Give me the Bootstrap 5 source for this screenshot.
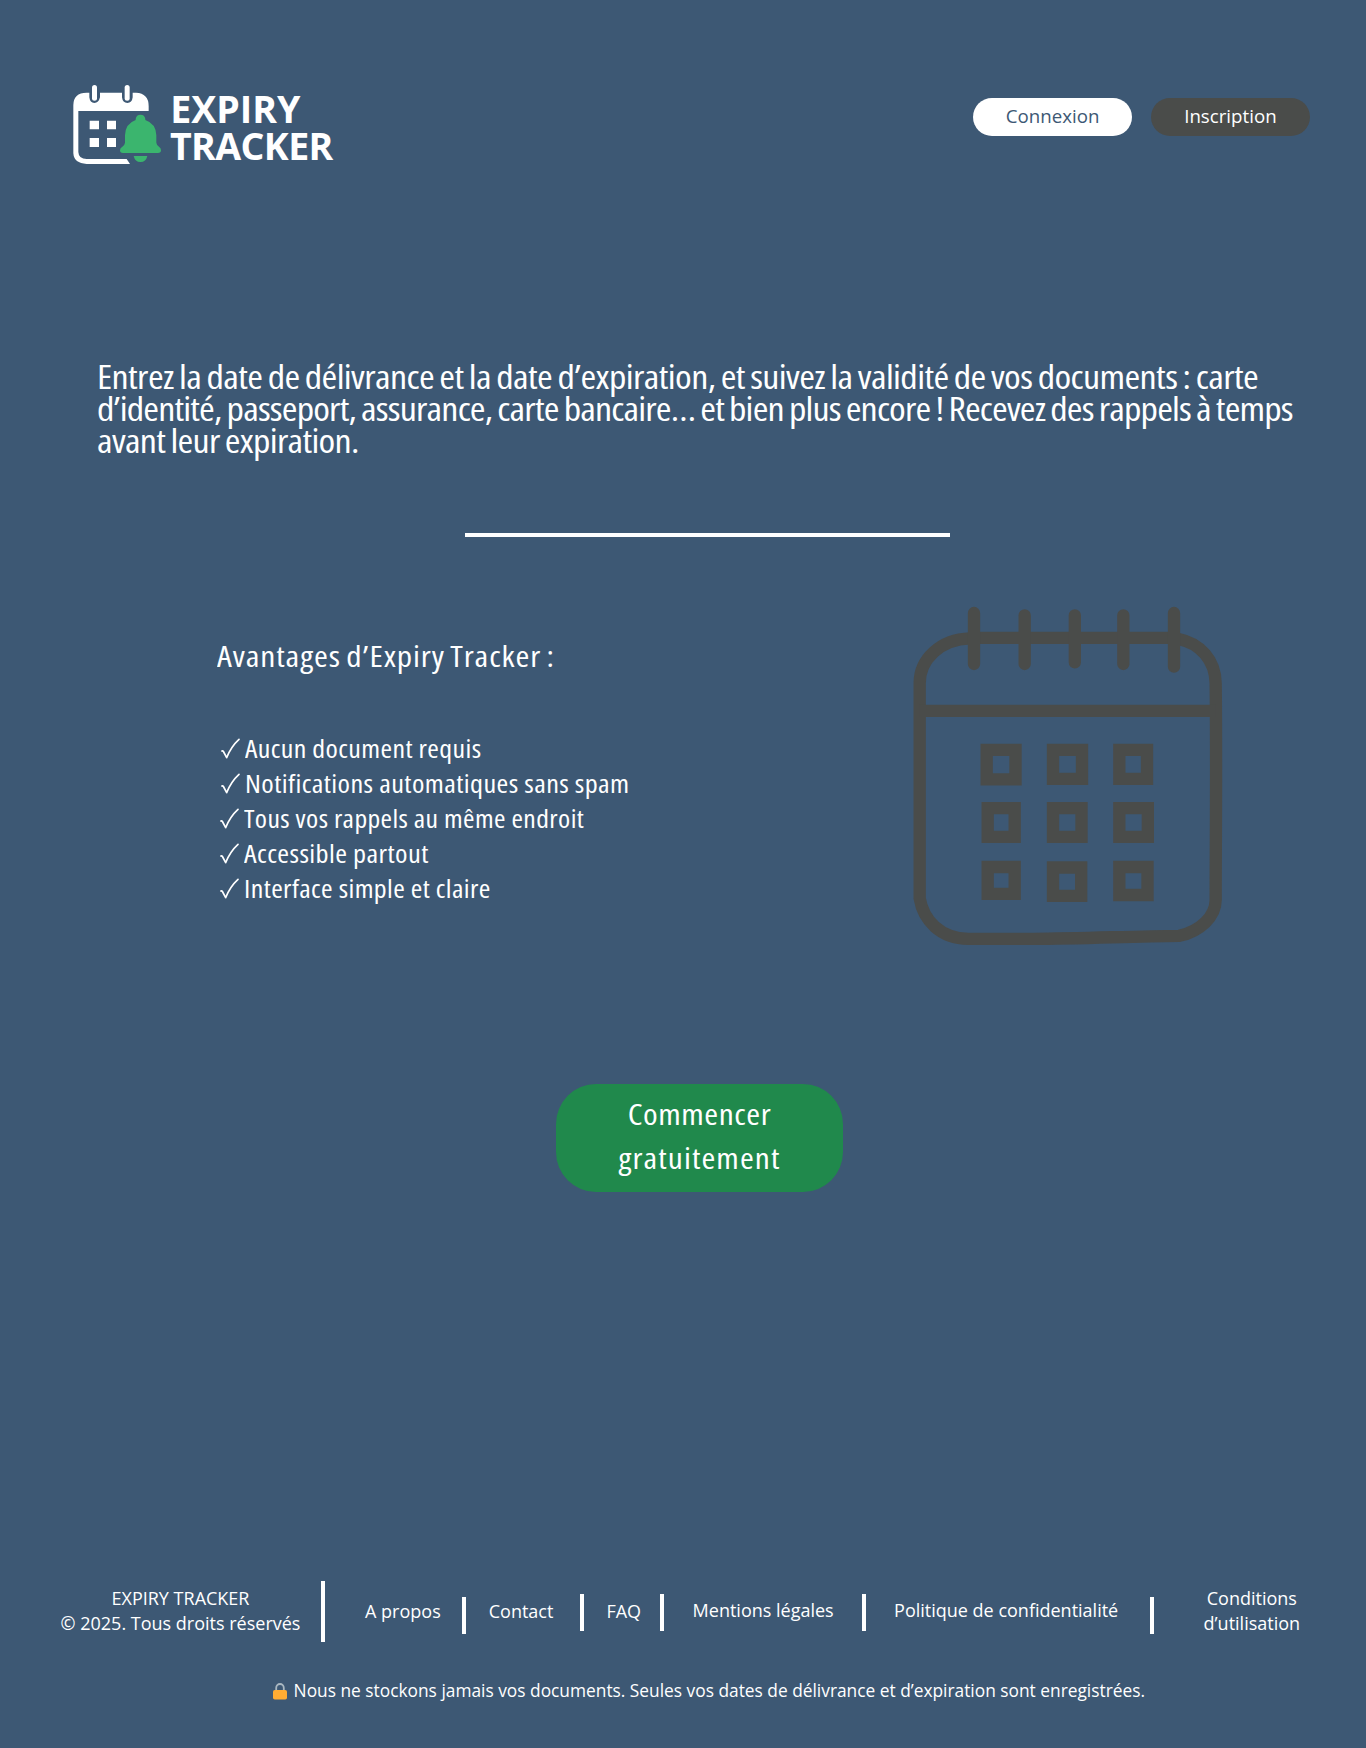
<!DOCTYPE html>
<html lang="fr">
<head>
<meta charset="utf-8">
<meta name="viewport" content="width=device-width, initial-scale=1">
<title>Expiry Tracker</title>
<link href="https://cdn.jsdelivr.net/npm/bootstrap@5.3.0/dist/css/bootstrap.min.css" rel="stylesheet">
<style>
:root{--et-bg:#3d5874;--et-dark:#4a4c4a;--et-green:#20894c}
body{background:var(--et-bg);color:#fff;font-family:"Open Sans","Noto Sans",sans-serif;width:1366px;min-height:1748px}
svg{display:block;flex:none}
.site-head{height:361px;padding:70px 56px 0 60px}
.brand-name{font-weight:700;font-size:37.5px;line-height:36.6px;padding-top:21px;margin-left:5px}
.brand-name span{display:block;width:max-content}
.brand-a{margin-left:.3px}
.brand-b{letter-spacing:-.6px}
.head-btns{padding-top:28px;gap:18.6px}
.pill{width:159.2px;height:38px;border:0;border-radius:19px;padding:0 0 2px;font-size:18.7px;line-height:36px}
.pill-light{background:#fff;color:var(--et-bg)}
.pill-dark{background:var(--et-dark);color:#fff}
/* condensed face, widened a little */
.semi{display:block;width:max-content;font-stretch:75%;transform:scaleX(var(--w,1.15));transform-origin:left center;white-space:nowrap}
.pitch{--w:1.162;margin:0;padding-left:97px;font-size:32.7px;line-height:32px;font-weight:500;letter-spacing:-.52px;word-spacing:-1px;height:96px}
.pitch .l2{letter-spacing:-.71px}
.pitch .l3{letter-spacing:-.6px}
.rule{width:485px;height:4.2px;background:#fff;margin:76.3px 0 0 464.5px}
.features{height:546.500px;padding:52.4px 130px 0 217px}
.features h1{--w:1.17;font-size:28.6px;line-height:40px;font-weight:400;letter-spacing:.75px;word-spacing:-1.4px;margin:46.500px 0 55px .2px}
.features li{font-size:24.6px;line-height:35px;letter-spacing:.35px;padding-left:4px}
.features li svg{margin:7px 5px 0 0}
.features li.shift{padding-left:2.900px}
.w1{--w:1.137}.w2{--w:1.15}.w3{--w:1.128}.w4{--w:1.155}
.cta{width:287.4px;height:107.8px;border:0;border-radius:40px;background:var(--et-green);color:#fff;font-size:29px;line-height:44px;letter-spacing:.5px;margin-left:556px;padding:0 0 4px}
.cta .semi{margin:0 auto;transform-origin:center}
.cta .c2{letter-spacing:.95px}
.site-foot{margin-top:388.600px;font-size:18px;line-height:25px;white-space:nowrap}
.foot-row{height:98px}
.foot-row a{color:#fff;text-decoration:none}
.bar{width:4px;height:36.5px;background:#fff;flex:none}
.bar-tall{height:61px;margin-left:20.4px;margin-top:.4px}
.low{margin-top:16.8px}.high{margin-top:13.8px}
.f1{width:241px;margin-left:60px;margin-top:5.5px}
.f2{width:76px;margin:18.8px 0 0 39.5px}
.f3{width:66px;margin:18.8px 0 0 22.2px}
.f4{width:35px;margin:18.5px 0 0 22.2px}
.f5{width:142px;margin:17.5px 0 0 27.9px}
.f6{width:225px;margin:17.5px 0 0 27.6px}
.f7{width:98px;margin:5.5px 0 0 49.2px}
.b2{margin-left:21px}.b3{margin-left:26px}.b4{margin-left:19px}.b5{margin-left:27.9px}.b6{margin-left:31px}
.foot-note{font-size:17.33px;margin-left:272.6px}
.foot-note svg{margin:5px 7px 0 0}
</style>
</head>
<body>
<header class="site-head d-flex justify-content-between align-items-start">
  <div class="d-flex align-items-start">
    <svg width="105" height="110" viewBox="0 0 315 330">
      <path fill="#fff" d="M40 250V106Q40 68 80 68H88V82Q90 99 103 99T120 82V68H186V82Q188 99 202 99T218 82V68H228Q266 70 266 108V123H55V246Q56 267 80 267H200L210 282H80Q42 280 40 250Z"/>
      <g fill="#fff"><rect x="96" y="45" width="15" height="47" rx="7.5"/><rect x="194" y="45" width="15" height="47" rx="7.5"/><path d="M89 152h28v26H89zM141 152h27v26h-27zM89 204h28v27H89zM141 204h27v27h-27z"/></g>
      <path fill="#3bb56e" d="M227 150V147Q229 134 241.500 134T256 147V150Q288 161 289 196V218Q290 226 297 230Q303 234 303 241Q303 249 294 249H189Q180 249 180 241Q180 234 187 230Q194 226 195 218V196Q196 161 227 150ZM221 258H262Q258 276 241.500 276T221 258Z"/>
    </svg>
    <div class="brand-name"><span class="brand-a">EXPIRY</span><span class="brand-b">TRACKER</span></div>
  </div>
  <div class="head-btns d-flex">
    <button class="btn pill pill-light">Connexion</button>
    <button class="btn pill pill-dark">Inscription</button>
  </div>
</header>
<main>
  <p class="pitch"><span class="semi">Entrez la date de délivrance et la date d’expiration, et suivez la validité de vos documents : carte</span><span class="semi l2">d’identité, passeport, assurance, carte bancaire… et bien plus encore ! Recevez des rappels à temps</span><span class="semi l3">avant leur expiration.</span></p>
  <div class="rule"></div>
  <section class="features d-flex justify-content-between align-items-start">
    <div>
      <h1 class="semi">Avantages d’Expiry Tracker :</h1>
      <ul class="list-unstyled m-0">
        <li class="d-flex"><svg width="19" height="22" viewBox="0 0 57 66"><path d="M3 39Q6 37 8 42L17 59Q30 26 54 4" fill="none" stroke="#fff" stroke-width="5" stroke-linecap="round" stroke-linejoin="round"/></svg><span class="semi w1">Aucun document requis</span></li>
        <li class="d-flex"><svg width="19" height="22" viewBox="0 0 57 66"><path d="M3 39Q6 37 8 42L17 59Q30 26 54 4" fill="none" stroke="#fff" stroke-width="5" stroke-linecap="round" stroke-linejoin="round"/></svg><span class="semi w2">Notifications automatiques sans spam</span></li>
        <li class="d-flex shift"><svg width="19" height="22" viewBox="0 0 57 66"><path d="M3 39Q6 37 8 42L17 59Q30 26 54 4" fill="none" stroke="#fff" stroke-width="5" stroke-linecap="round" stroke-linejoin="round"/></svg><span class="semi w3">Tous vos rappels au même endroit</span></li>
        <li class="d-flex shift"><svg width="19" height="22" viewBox="0 0 57 66"><path d="M3 39Q6 37 8 42L17 59Q30 26 54 4" fill="none" stroke="#fff" stroke-width="5" stroke-linecap="round" stroke-linejoin="round"/></svg><span class="semi w4">Accessible partout</span></li>
        <li class="d-flex shift"><svg width="19" height="22" viewBox="0 0 57 66"><path d="M3 39Q6 37 8 42L17 59Q30 26 54 4" fill="none" stroke="#fff" stroke-width="5" stroke-linecap="round" stroke-linejoin="round"/></svg><span class="semi w1">Interface simple et claire</span></li>
      </ul>
    </div>
    <svg width="346" height="370" viewBox="0 0 1038 1110">
      <g fill="none" stroke="#4a4c4a" stroke-width="37">
        <path d="M252 143.500H851M240 145C150 148 89 208 89 280V925C100 990 150 1046 235 1046.500H430C580 1046 720 1039 868 1037.500C930 1024 977 980 977 930C977 740 980 540 977 280C976 210 930 160 866 147"/>
        <path d="M89 362.500H977"/>
        <path stroke-linecap="round" d="M252 69V222M404 76V222M554.500 76V217M700 76V222M852 69V230"/>
        <path d="M290 479.500h86.500v88.500H290zM489 479.500h87v87h-87zM688 479.500h83v87h-83zM293 654.500h81v86h-81zM489 654.500h85.500v86H489zM688 654.500h85.500v86H688zM293 831h81v80.500h-81zM489 832.500h84.500v85H489zM688 831h84.500v84H688z"/>
      </g>
    </svg>
  </section>
  <button class="btn cta d-block"><span class="semi">Commencer</span><span class="semi c2">gratuitement</span></button>
</main>
<footer class="site-foot">
  <div class="foot-row d-flex align-items-start">
    <div class="f1 text-center">EXPIRY TRACKER<br>© 2025. Tous droits réservés</div>
    <div class="bar bar-tall"></div>
    <a class="f2 text-center" href="#">A propos</a><div class="bar low b2"></div>
    <a class="f3 text-center" href="#">Contact</a><div class="bar high b3"></div>
    <a class="f4 text-center" href="#">FAQ</a><div class="bar high b4"></div>
    <a class="f5 text-center" href="#">Mentions légales</a><div class="bar high b5"></div>
    <a class="f6 text-center" href="#">Politique de confidentialité</a><div class="bar low b6"></div>
    <a class="f7 text-center" href="#">Conditions<br>d’utilisation</a>
  </div>
  <div class="foot-note d-flex align-items-start">
    <svg width="14" height="17" viewBox="0 0 14 17"><path d="M3.200 8V5A3.800 4 0 0 1 10.800 5V8" fill="none" stroke="#aab8c2" stroke-width="1.800"/><rect y="7" width="14" height="9.600" rx="1.800" fill="#ffac33"/></svg>
    <span>Nous ne stockons jamais vos documents. Seules vos dates de délivrance et d’expiration sont enregistrées.</span>
  </div>
</footer>
<script src="https://cdn.jsdelivr.net/npm/bootstrap@5.3.0/dist/js/bootstrap.bundle.min.js"></script>
</body>
</html>
